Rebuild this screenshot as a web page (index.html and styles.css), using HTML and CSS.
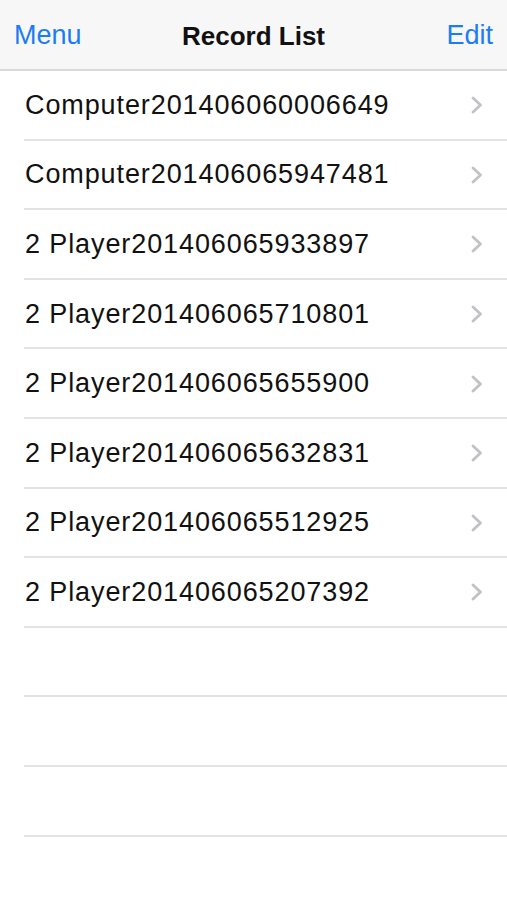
FILE: index.html
```html
<!DOCTYPE html>
<html lang="en">
<head>
<meta charset="utf-8">
<title>Record List</title>
<link rel="stylesheet" href="styles.css">
</head>
<body>
<header class="navbar">
  <span class="nav-btn">Menu</span>
  <span class="nav-title">Record List</span>
  <span class="nav-btn">Edit</span>
</header>
<ul class="list">
  <li class="row"><span class="label">Computer201406060006649</span><svg class="chev" viewBox="0 0 12 18"><path d="M2 2 L9.5 9 L2 16" /></svg></li>
  <li class="row"><span class="label">Computer201406065947481</span><svg class="chev" viewBox="0 0 12 18"><path d="M2 2 L9.5 9 L2 16" /></svg></li>
  <li class="row"><span class="label">2 Player201406065933897</span><svg class="chev" viewBox="0 0 12 18"><path d="M2 2 L9.5 9 L2 16" /></svg></li>
  <li class="row"><span class="label">2 Player201406065710801</span><svg class="chev" viewBox="0 0 12 18"><path d="M2 2 L9.5 9 L2 16" /></svg></li>
  <li class="row"><span class="label">2 Player201406065655900</span><svg class="chev" viewBox="0 0 12 18"><path d="M2 2 L9.5 9 L2 16" /></svg></li>
  <li class="row"><span class="label">2 Player201406065632831</span><svg class="chev" viewBox="0 0 12 18"><path d="M2 2 L9.5 9 L2 16" /></svg></li>
  <li class="row"><span class="label">2 Player201406065512925</span><svg class="chev" viewBox="0 0 12 18"><path d="M2 2 L9.5 9 L2 16" /></svg></li>
  <li class="row"><span class="label">2 Player201406065207392</span><svg class="chev" viewBox="0 0 12 18"><path d="M2 2 L9.5 9 L2 16" /></svg></li>
  <li class="row empty"></li>
  <li class="row empty"></li>
  <li class="row empty"></li>
</ul>
</body>
</html>
```
FILE: styles.css
```css
* { box-sizing: border-box; }
html, body {
  margin: 0;
  padding: 0;
  background: #ffffff;
  font-family: "Liberation Sans", Arial, sans-serif;
  -webkit-font-smoothing: antialiased;
}
.navbar {
  height: 71px;
  background: #f7f7f7;
  border-bottom: 2px solid #d9d9d9;
  display: flex;
  align-items: center;
  justify-content: space-between;
  padding: 0 14px 0 14px;
  position: relative;
}
.nav-btn {
  color: #1b7cf5;
  font-size: 27px;
  line-height: 1;
  padding-top: 2px;
}
.nav-title {
  position: absolute;
  left: 0;
  right: 0;
  text-align: center;
  font-weight: bold;
  font-size: 26px;
  color: #111;
  line-height: 1;
  padding-top: 2px;
  pointer-events: none;
}
.list {
  list-style: none;
  margin: 0;
  padding: 0 0 0 24px;
}
.row {
  height: 69.6px;
  border-bottom: 2px solid #e3e3e3;
  display: flex;
  align-items: center;
  justify-content: space-between;
  padding: 1px 24px 0 1px;
}
.label {
  font-size: 27px;
  letter-spacing: 0.9px;
  color: #111;
  line-height: 1;
}
.chev {
  width: 12px;
  height: 18px;
  fill: none;
  stroke: #c2c2c6;
  stroke-width: 2.8;
  stroke-linecap: round;
  stroke-linejoin: round;
}
```
